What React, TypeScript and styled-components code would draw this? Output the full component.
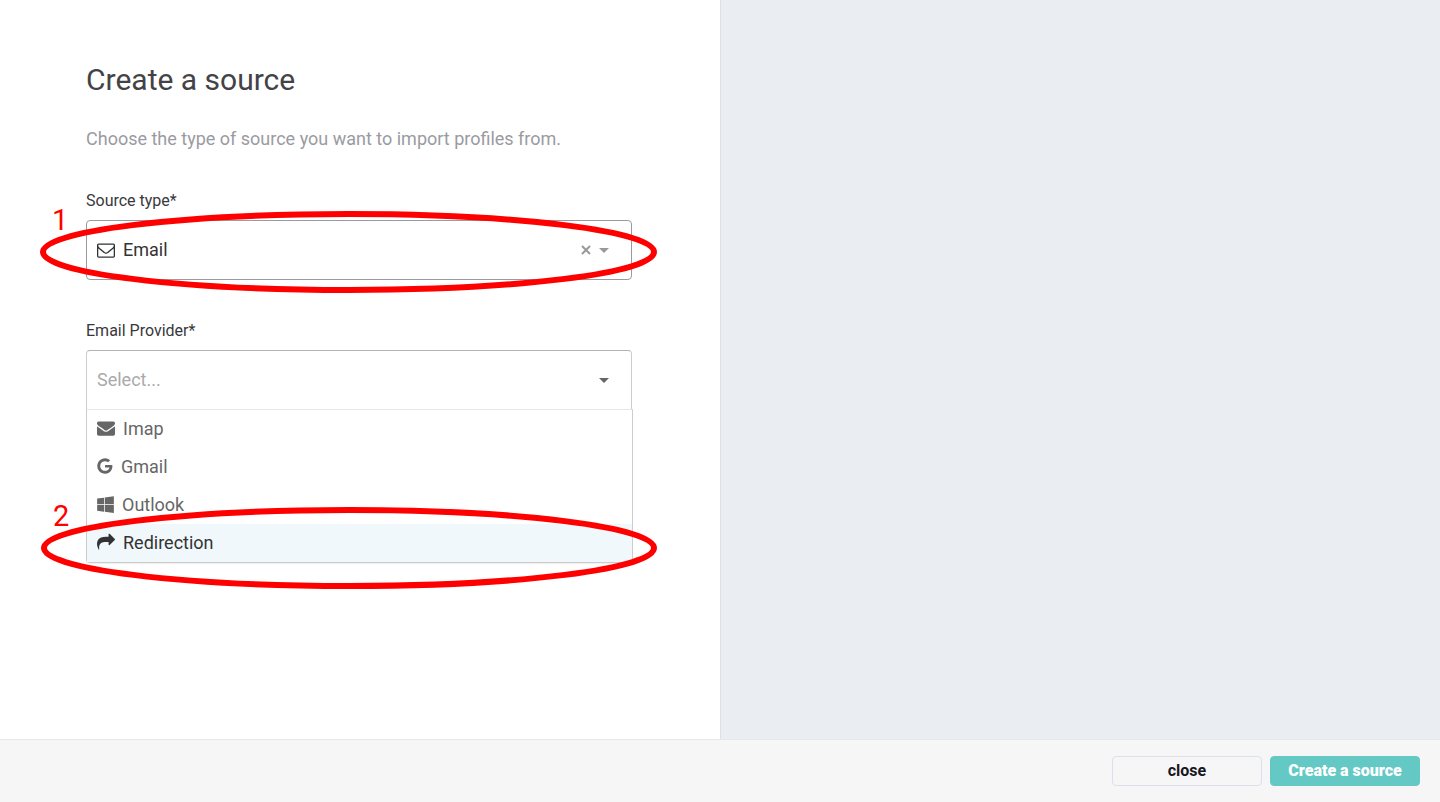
import React, { useState } from "react";
import styled, { createGlobalStyle } from "styled-components";

const GlobalStyle = createGlobalStyle`
  *, *::before, *::after { box-sizing: border-box; }
  body {
    margin: 0;
    background: #fff;
    color: #434343;
    font-family: Roboto, "Liberation Sans", sans-serif;
  }
  button, select { font-family: inherit; }
`;

const Page = styled.div`
  display: flex;
  flex-direction: column;
  min-height: 100vh;
`;

const Columns = styled.main`
  flex: 1;
  display: grid;
  grid-template-columns: 1fr 1fr;
`;

const FormPane = styled.form`
  padding: 60px 88px 40px 86px;
`;

const PreviewPane = styled.aside`
  background: #eaedf2;
  border-left: 1px solid #dae1ea;
`;

const Title = styled.h1`
  margin: 0;
  font-size: 30px;
  line-height: 40px;
  font-weight: 400;
  color: #434347;
`;

const Intro = styled.p`
  margin: 26px 0 39px;
  font-size: 18px;
  line-height: 26px;
  color: #9a9ba2;
`;

const Field = styled.div`
  margin-bottom: 41px;
`;

const Label = styled.label`
  display: block;
  margin-bottom: 9px;
  font-size: 16px;
  line-height: 20px;
  color: #38383c;
`;

const ControlWrap = styled.div`
  position: relative;
`;

const Control = styled.div<{ $open?: boolean }>`
  display: flex;
  align-items: center;
  gap: 8px;
  height: 60px;
  padding: 0 22px 0 10px;
  background: #fff;
  border: 1px solid ${(p) => (p.$open ? "#ccc" : "#9a9ba2")};
  border-top-color: ${(p) => (p.$open ? "#b3b3b3" : "#9a9ba2")};
  border-bottom-color: ${(p) => (p.$open ? "#e6e6e6" : "#9a9ba2")};
  border-radius: ${(p) => (p.$open ? "4px 4px 0 0" : "4px")};
  color: #333;
`;

const Select = styled.select<{ $empty?: boolean }>`
  flex: 1;
  min-width: 0;
  height: 58px;
  padding: 0 0 2px;
  border: 0;
  outline: 0;
  appearance: none;
  background: transparent;
  font-size: 18px;
  color: ${(p) => (p.$empty ? "#aaa" : "#333")};
`;

const ClearButton = styled.button`
  display: flex;
  padding: 0;
  border: 0;
  background: none;
  color: #999;
  cursor: pointer;
`;

const Menu = styled.div`
  position: absolute;
  top: 59px;
  left: 0;
  right: -1px;
  background: #fff;
  border: 1px solid #ccc;
  border-top-color: #e6e6e6;
  border-radius: 0 0 4px 4px;
  box-shadow: 0 1px 0 rgba(0, 0, 0, 0.06);
`;

const Item = styled.div`
  position: relative;
`;

const Option = styled.button<{ $active: boolean }>`
  display: flex;
  align-items: center;
  gap: 8px;
  width: 100%;
  height: 38px;
  padding: 0 10px 2px;
  border: 0;
  border-radius: 0;
  background: ${(p) => (p.$active ? "#f1f8fc" : "#fff")};
  color: ${(p) => (p.$active ? "#333" : "#666")};
  font-size: 18px;
  text-align: left;
  cursor: pointer;
`;

const RingBox = styled.div<{ $top: number }>`
  position: absolute;
  z-index: 2;
  top: ${(p) => p.$top}px;
  left: -46px;
  right: -25px;
  height: 82px;
  padding: 3px;
  pointer-events: none;

  svg {
    display: block;
    width: 100%;
    height: 100%;
    overflow: visible;
  }
`;

const Ring = ({ top }: { top: number }) => (
  <RingBox $top={top}>
    <svg aria-hidden="true">
      <ellipse cx="50%" cy="50%" rx="50%" ry="50%" fill="none" stroke="#f00" strokeWidth="6" />
    </svg>
  </RingBox>
);

const StepNumber = styled.span<{ $top: number }>`
  position: absolute;
  z-index: 2;
  top: ${(p) => p.$top}px;
  left: -34px;
  font-size: 29px;
  line-height: 32px;
  color: #f00;
`;

const Footer = styled.footer`
  display: flex;
  justify-content: flex-end;
  gap: 8px;
  padding: 16px 20px;
  background: #f6f6f6;
  border-top: 1px solid #e6e8ea;
`;

const Button = styled.button<{ $primary?: boolean }>`
  width: 150px;
  height: 30px;
  padding: 0;
  border: 1px solid ${(p) => (p.$primary ? "#64c8c4" : "#dbe0ea")};
  border-radius: 4px;
  background: ${(p) => (p.$primary ? "#64c8c4" : "#f6f6f6")};
  color: ${(p) => (p.$primary ? "#fff" : "#17171c")};
  font-size: 16px;
  line-height: 20px;
  font-weight: ${(p) => (p.$primary ? 900 : 700)};
  cursor: pointer;
`;

type IconProps = { d: string; units?: number; width?: number };

/* Glyphs are drawn on a 1792-unit em, shown 18px tall. */
const GlyphSvg = styled.svg`
  flex: none;
`;

const Glyph = ({ d, units = 1792, width = 18 }: IconProps) => (
  <GlyphSvg
    width={width}
    height={18}
    viewBox={`0 0 ${units} 1792`}
    fill="currentColor"
    aria-hidden="true"
  >
    <path d={d} />
  </GlyphSvg>
);

const Caret = ({ color }: { color: string }) => (
  <svg width="10" height="5" viewBox="0 0 10 5" fill={color} aria-hidden="true">
    <path d="M0 0h10L5 5z" />
  </svg>
);

const envelopeOutline =
  "M1664 1504v-768q-32 36-69 66-268 206-426 338-51 43-83 67t-86.5 48.5-102.5 24.5h-2q-48 0-102.5-24.5t-86.5-48.5-83-67q-158-132-426-338-37-30-69-66v768q0 13 9.5 22.5t22.5 9.5h1472q13 0 22.5-9.5t9.5-22.5zm0-1051v-24.5l-.5-13-3-12.5-5.5-9-9-7.5-14-2.5h-1472q-13 0-22.5 9.5t-9.5 22.5q0 168 147 284 193 152 401 317 6 5 35 29.5t46 37.5 44.5 31.5 50.5 27.5 43 9h2q20 0 43-9t50.5-27.5 44.5-31.5 46-37.5 35-29.5q208-165 401-317 54-43 100.5-115.5t46.5-131.5zm128-37v1088q0 66-47 113t-113 47h-1472q-66 0-113-47t-47-113v-1088q0-66 47-113t113-47h1472q66 0 113 47t47 113z";
const envelope =
  "M1792 710v794q0 66-47 113t-113 47h-1472q-66 0-113-47t-47-113v-794q44 49 101 87 362 246 497 345 57 42 92.5 65.5t94.5 48 110 24.5h2q51 0 110-24.5t94.5-48 92.5-65.5q170-123 498-345 57-39 100-87zm0-294q0 79-49 151t-122 123q-376 261-468 325-10 7-42.5 31t-54 38.5-52 32.5-57.5 27-50 9h-2q-23 0-50-9t-57.5-27-52-32.5-54-38.5-42.5-31q-91-64-262-182.5t-205-142.5q-62-42-117-115.5t-55-136.5q0-78 41.5-130t118.5-52h1472q65 0 112.5 47t47.5 113z";
const google =
  "M768 786h725q12 67 12 128 0 217-91 387.5t-259.5 266.5-386.5 96q-157 0-299-60.5t-245-163.5-163.5-245-60.5-299 60.5-299 163.5-245 245-163.5 299-60.5q300 0 515 201l-209 201q-123-119-306-119-129 0-238.5 65t-173.5 176.5-64 243.5 64 243.5 173.5 176.5 238.5 65q87 0 160-24t120-60 82-82 51.5-87 22.5-78h-436v-264z";
const windows =
  "M682 1006v651l-682-94v-557h682zm0-743v659h-682v-565zm982 743v786l-907-125v-661h907zm0-878v794h-907v-669z";
const share =
  "M1792 640q0 26-19 45l-512 512q-19 19-45 19t-45-19-19-45v-256h-224q-98 0-175.5 6t-154 21.5-133 42.5-105.5 69.5-80 101-48.5 138.5-17.5 181q0 55 5 123 0 6 2.5 23.5t2.5 26.5q0 15-8.5 25t-23.5 10q-16 0-28-17-7-9-13-22t-13.5-30-10.5-24q-127-285-127-451 0-199 53-333 162-403 875-403h224v-256q0-26 19-45t45-19 45 19l512 512q19 19 19 45z";

const providers = [
  { name: "Imap", d: envelope, units: 1792, width: 18 },
  { name: "Gmail", d: google, units: 1536, width: 16 },
  { name: "Outlook", d: windows, units: 1664, width: 17 },
  { name: "Redirection", d: share, units: 1792, width: 18, step: 2 },
];

export default function App() {
  const [active, setActive] = useState("Redirection");

  return (
    <Page>
      <GlobalStyle />
      <Columns>
        <FormPane id="source-form" onSubmit={(e) => e.preventDefault()}>
          <Title>Create a source</Title>
          <Intro>Choose the type of source you want to import profiles from.</Intro>

          <Field>
            <Label htmlFor="source-type">Source type*</Label>
            <ControlWrap>
              <Control>
                <Glyph d={envelopeOutline} />
                <Select id="source-type" defaultValue="email">
                  <option value="email">Email</option>
                </Select>
                <ClearButton type="button" aria-label="Clear source type">
                  <svg width="10" height="10" viewBox="0 0 10 10" stroke="currentColor" strokeWidth="2" aria-hidden="true">
                    <path d="M1 1l8 8M9 1L1 9" />
                  </svg>
                </ClearButton>
                <Caret color="#999" />
              </Control>
              <StepNumber $top={-16}>1</StepNumber>
              <Ring top={-9} />
            </ControlWrap>
          </Field>

          <Field>
            <Label htmlFor="email-provider">Email Provider*</Label>
            <ControlWrap>
              <Control $open>
                <Select id="email-provider" defaultValue="" $empty>
                  <option value="">Select...</option>
                </Select>
                <Caret color="#666" />
              </Control>
              <Menu role="listbox" aria-label="Email Provider">
                {providers.map((p) => (
                  <Item key={p.name}>
                    <Option
                      type="button"
                      role="option"
                      aria-selected={active === p.name}
                      $active={active === p.name}
                      onMouseEnter={() => setActive(p.name)}
                    >
                      <Glyph d={p.d} units={p.units} width={p.width} />
                      {p.name}
                    </Option>
                    {p.step && (
                      <>
                        <StepNumber $top={-24}>{p.step}</StepNumber>
                        <Ring top={-17} />
                      </>
                    )}
                  </Item>
                ))}
              </Menu>
            </ControlWrap>
          </Field>
        </FormPane>
        <PreviewPane />
      </Columns>
      <Footer>
        <Button type="button">close</Button>
        <Button type="submit" form="source-form" $primary>
          Create a source
        </Button>
      </Footer>
    </Page>
  );
}
